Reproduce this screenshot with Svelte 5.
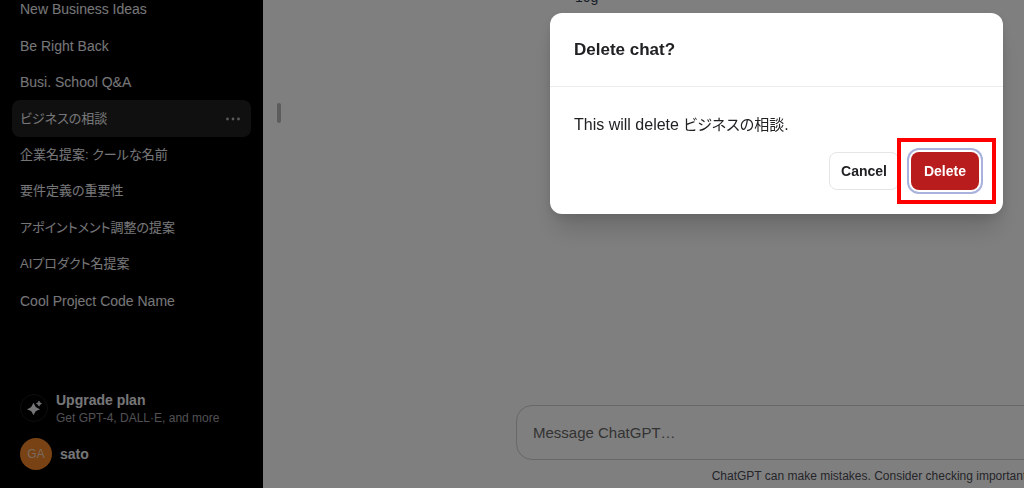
<script lang="ts">
  const chats: { title: string; lang: string }[] = [
    { title: "New Business Ideas", lang: "en" },
    { title: "Be Right Back", lang: "en" },
    { title: "Busi. School Q&A", lang: "en" },
    { title: "ビジネスの相談", lang: "ja" },
    { title: "企業名提案: クールな名前", lang: "ja" },
    { title: "要件定義の重要性", lang: "ja" },
    { title: "アポイントメント調整の提案", lang: "ja" },
    { title: "AIプロダクト名提案", lang: "ja" },
    { title: "Cool Project Code Name", lang: "en" }
  ];

  let active = $state(chats[3]);
  let message: string = $state("");
</script>

<div class="app">
  <aside class="sidebar">
    <ul class="chats">
      {#each chats as chat}
        <li class:active={chat.title === active.title}>
          <a href="#chat" class:ja={chat.lang === "ja"} onclick={() => (active = chat)}>{chat.title}</a>
          {#if chat.title === active.title}
            <button class="more" aria-label="Chat options">
              <svg width="16" height="16" viewBox="0 0 16 16" fill="currentColor">
                <circle cx="2.5" cy="8" r="1.4" />
                <circle cx="8" cy="8" r="1.4" />
                <circle cx="13.5" cy="8" r="1.4" />
              </svg>
            </button>
          {/if}
        </li>
      {/each}
    </ul>

    <div class="account">
      <a class="upgrade" href="#upgrade">
        <span class="sparkle">
          <svg width="16" height="16" viewBox="0 0 16 16" fill="currentColor">
            <path d="M7.5 3 Q8 3 8.4 4.6 Q9.2 7.7 12.2 8.4 Q13.8 8.8 13.8 9.2 Q13.8 9.6 12.2 10 Q9.2 10.7 8.4 13.6 Q8 15 7.5 15 Q7 15 6.6 13.6 Q5.8 10.7 2.8 10 Q1.2 9.6 1.2 9.2 Q1.2 8.8 2.8 8.4 Q5.8 7.7 6.6 4.6 Q7 3 7.5 3Z" />
            <path d="M13 1 Q13.5 3.1 15.6 3.6 Q13.5 4.1 13 6.2 Q12.5 4.1 10.4 3.6 Q12.5 3.1 13 1Z" stroke="currentColor" stroke-width="0.6" />
          </svg>
        </span>
        <span class="plan">
          <strong>Upgrade plan</strong>
          <small>Get GPT-4, DALL·E, and more</small>
        </span>
      </a>
      <button class="user">
        <span class="avatar">GA</span>
        sato
      </button>
    </div>
  </aside>

  <button class="handle" aria-label="Close sidebar"></button>

  <main>
    <p class="reply">10g</p>
    <div class="composer">
      <input type="text" placeholder="Message ChatGPT…" aria-label="Message ChatGPT" bind:value={message} />
      <p class="notice">ChatGPT can make mistakes. Consider checking important information.</p>
    </div>
  </main>
</div>

<div class="overlay">
  <div class="dialog" role="dialog" aria-modal="true" aria-labelledby="dialog-title">
    <h2 id="dialog-title">Delete chat?</h2>
    <div class="content">
      <p>This will delete <span class:ja={active.lang === "ja"}>{active.title}</span>.</p>
      <div class="actions">
        <button class="cancel">Cancel</button>
        <div class="marked">
          <button class="delete">Delete</button>
        </div>
      </div>
    </div>
  </div>
</div>

<style>
  :global(body) {
    overflow: hidden;
    font-family: "Liberation Sans", "Noto Sans CJK JP", sans-serif;
    font-feature-settings: "palt";
  }

  .app {
    display: flex;
    height: 100vh;
    overflow: hidden;
    background: #fff;
  }

  button {
    padding: 0;
    border: none;
    background: none;
    font: inherit;
    color: inherit;
    cursor: pointer;
  }

  a {
    color: inherit;
    text-decoration: none;
  }

  .sidebar {
    display: flex;
    flex-direction: column;
    justify-content: space-between;
    flex: none;
    box-sizing: border-box;
    width: 263px;
    padding: 0 12px 18px;
    background: #000;
    color: #ececf1;
    font-size: 14px;
  }

  .chats {
    display: grid;
    grid-auto-rows: 1fr;
    height: 328px;
    margin: -9px 0 0;
    padding: 0;
    list-style: none;
  }

  .chats li {
    display: flex;
    align-items: center;
    justify-content: space-between;
    padding: 0 10px 0 8px;
    border-radius: 8px;
    line-height: 20px;
    white-space: nowrap;
  }

  .chats li.active {
    background: #202020;
  }

  .chats .ja {
    font-size: 13px;
  }

  .more {
    display: flex;
    color: #b4b4b4;
  }

  .account {
    display: flex;
    flex-direction: column;
    gap: 12px;
    padding-left: 8px;
  }

  .upgrade {
    display: flex;
    align-items: center;
    gap: 8px;
  }

  .sparkle {
    display: flex;
    align-items: center;
    justify-content: center;
    box-sizing: border-box;
    width: 28px;
    height: 28px;
    border: 1px solid #1c1c1c;
    border-radius: 50%;
  }

  .plan {
    display: flex;
    flex-direction: column;
  }

  .plan strong {
    line-height: 20px;
  }

  .plan small {
    font-size: 12px;
    line-height: 16px;
    color: #a0a0a8;
  }

  .user {
    display: flex;
    align-items: center;
    gap: 8px;
    font-weight: bold;
  }

  .avatar {
    width: 32px;
    height: 32px;
    border-radius: 50%;
    background: #f08428;
    color: #f0d4bc;
    font-size: 12px;
    font-weight: normal;
    line-height: 32px;
    text-align: center;
  }

  .handle {
    align-self: flex-start;
    flex: none;
    width: 4px;
    height: 20px;
    margin: 103px 0 0 14px;
    border-radius: 2px;
    background: #b8b8b8;
  }

  main {
    display: flex;
    flex-direction: column;
    justify-content: space-between;
    flex: 1;
    min-width: 0;
    padding-left: 235px;
  }

  .reply {
    margin: -13px 0 0 59px;
    font-size: 14px;
    line-height: 20px;
    color: #374151;
  }

  .composer {
    margin-right: -264px;
  }

  .composer input {
    display: block;
    box-sizing: border-box;
    width: 100%;
    height: 55px;
    padding: 0 16px;
    border: 1px solid #d0d0d0;
    border-radius: 16px;
    background: transparent;
    font: inherit;
    font-size: 15px;
  }

  .composer input::placeholder {
    color: #666;
    opacity: 1;
  }

  .notice {
    margin: 0;
    padding: 8px 0 4px;
    font-size: 12px;
    line-height: 16px;
    color: #4b4b55;
    text-align: center;
  }

  .overlay {
    position: fixed;
    inset: 0;
    display: flex;
    align-items: flex-start;
    justify-content: flex-end;
    padding: 13px 21px;
    background: rgba(0, 0, 0, 0.5);
  }

  .dialog {
    width: 100%;
    max-width: 453px;
    border-radius: 12px;
    background: #fff;
    color: #202123;
    box-shadow: 0 20px 25px -5px rgba(0, 0, 0, 0.15), 0 4px 12px rgba(0, 0, 0, 0.1);
  }

  .dialog h2 {
    margin: 0;
    padding: 24px;
    border-bottom: 1px solid #ececec;
    font-size: 17px;
    font-weight: bold;
    line-height: 25px;
  }

  .content {
    padding: 24px;
  }

  .content p {
    margin: 0;
    font-size: 16px;
    line-height: 27px;
  }

  .content .ja {
    font-size: 15px;
  }

  .actions {
    display: flex;
    align-items: center;
    justify-content: flex-end;
    gap: 12px;
    padding-top: 14px;
    font-size: 14px;
    font-weight: bold;
  }

  .actions button {
    display: block;
    height: 38px;
    padding: 0 13px;
    border-radius: 8px;
  }

  .actions .cancel {
    padding: 0 11px;
    border: 1px solid #e5e5e5;
  }

  .actions .delete {
    background: #b91c1c;
    color: #fff;
    box-shadow: 0 0 0 2px #fff, 0 0 0 4px #a9b2dc;
  }

  .marked {
    position: relative;
  }

  /* red frame around the button to press */
  .marked::after {
    content: "";
    position: absolute;
    inset: -14px -17px -14px -14px;
    border: 4px solid #f00;
    pointer-events: none;
  }
</style>
